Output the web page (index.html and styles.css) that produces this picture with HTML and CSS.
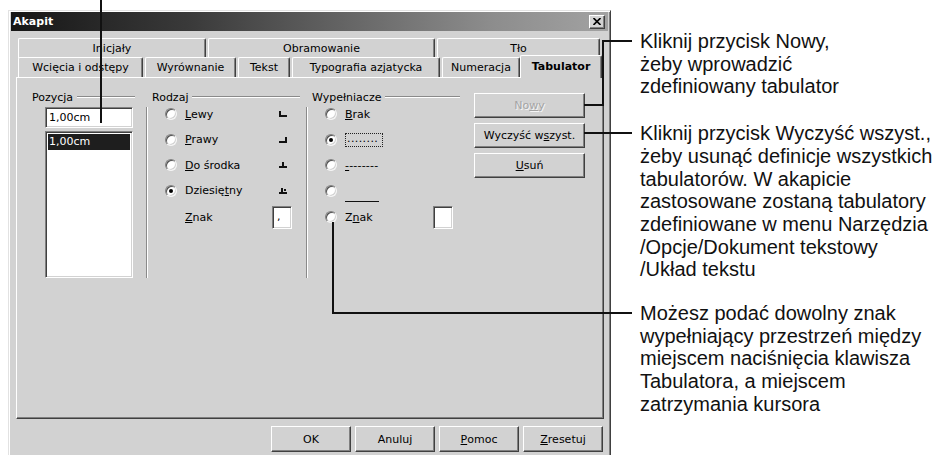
FILE: index.html
```html
<!DOCTYPE html>
<html lang="pl">
<head>
<meta charset="utf-8">
<title>Akapit</title>
<link rel="stylesheet" href="styles.css">
</head>
<body>
<div class="stage">
  <div class="dialog">
    <div class="titlebar">
      <span class="title">Akapit</span>
      <span class="close">
        <svg width="8" height="7" viewBox="0 0 8 7"><path d="M0.5 0 L7.5 7 M7.5 0 L0.5 7" stroke="#000" stroke-width="1.6" fill="none"/></svg>
      </span>
    </div>
    <div class="client">
      <div class="tabs">
        <div class="tabrow back">
          <div class="tab t-inicjaly">Inicjały</div>
          <div class="tab t-obram">Obramowanie</div>
          <div class="tab t-tlo">Tło</div>
        </div>
        <div class="tabrow front">
          <div class="tab t-wciecia">Wcięcia i odstępy</div>
          <div class="tab t-wyrown">Wyrównanie</div>
          <div class="tab t-tekst">Tekst</div>
          <div class="tab t-typo">Typografia azjatycka</div>
          <div class="tab t-numer">Numeracja</div>
          <div class="tab t-tabul active">Tabulator</div>
        </div>
      </div>
      <div class="panel">
        <div class="group pos">
          <div class="legend"><span>Pozycja</span><i class="rule"></i></div>
          <div class="pos-body">
            <div class="field">1,00cm</div>
            <div class="list">
              <div class="item selected">1,00cm</div>
            </div>
          </div>
        </div>
        <div class="group kind">
          <div class="legend"><span>Rodzaj</span><i class="rule"></i></div>
          <div class="gbody">
            <div class="opt"><span class="radio"></span><span class="lbl"><u>L</u>ewy</span>
              <svg class="stop" width="8" height="6" viewBox="0 0 8 6"><rect x="0" y="0" width="2" height="6"/><rect x="0" y="4" width="8" height="2"/></svg></div>
            <div class="opt"><span class="radio"></span><span class="lbl"><u>P</u>rawy</span>
              <svg class="stop" width="8" height="6" viewBox="0 0 8 6"><rect x="6" y="0" width="2" height="6"/><rect x="0" y="4" width="8" height="2"/></svg></div>
            <div class="opt"><span class="radio"></span><span class="lbl"><u>D</u>o środka</span>
              <svg class="stop" width="8" height="6" viewBox="0 0 8 6"><rect x="3" y="0" width="2" height="6"/><rect x="0" y="4" width="8" height="2"/></svg></div>
            <div class="opt"><span class="radio on"></span><span class="lbl">Dziesię<u>t</u>ny</span>
              <svg class="stop" width="8" height="6" viewBox="0 0 8 6"><rect x="2" y="0" width="2" height="6"/><rect x="0" y="4" width="8" height="2"/><rect x="5" y="1" width="2" height="2"/></svg></div>
            <div class="opt char"><span class="lbl"><u>Z</u>nak</span><span class="charbox">,</span></div>
          </div>
        </div>
        <div class="group fill">
          <div class="legend"><span>Wypełniacze</span><i class="rule"></i></div>
          <div class="gbody">
            <div class="opt"><span class="radio"></span><span class="lbl"><u>B</u>rak</span></div>
            <div class="opt"><span class="radio on"></span><span class="lbl dots">........</span></div>
            <div class="opt"><span class="radio"></span><span class="lbl dashes"><u>-</u>-------</span></div>
            <div class="opt"><span class="radio"></span><span class="lbl solid"></span></div>
            <div class="opt char"><span class="radio"></span><span class="lbl">Z<u>n</u>ak</span><span class="charbox"></span></div>
          </div>
        </div>
        <div class="actions">
          <div class="btn disabled">No<u>w</u>y</div>
          <div class="btn">Wyczyść w<u>s</u>zyst.</div>
          <div class="btn"><u>U</u>suń</div>
        </div>
      </div>
      <div class="footer">
        <div class="btn">OK</div>
        <div class="btn">Anuluj</div>
        <div class="btn"><u>P</u>omoc</div>
        <div class="btn"><u>Z</u>resetuj</div>
      </div>
    </div>
  </div>

  <div class="notes">
    <p class="note n1">Kliknij przycisk Nowy,<br>żeby wprowadzić<br>zdefiniowany tabulator</p>
    <p class="note n2">Kliknij przycisk Wyczyść wszyst.,<br>żeby usunąć definicje wszystkich<br>tabulatorów. W akapicie<br>zastosowane zostaną tabulatory<br>zdefiniowane w menu Narzędzia<br>/Opcje/Dokument tekstowy<br>/Układ tekstu</p>
    <p class="note n3">Możesz podać dowolny znak<br>wypełniający przestrzeń między<br>miejscem naciśnięcia klawisza<br>Tabulatora, a miejscem<br>zatrzymania kursora</p>
  </div>

  <!-- leader lines from the notes to the controls -->
  <div class="leader l-pos"></div>
  <div class="leader l-new-a"></div>
  <div class="leader l-new-b"></div>
  <div class="leader l-new-c"></div>
  <div class="leader l-clear"></div>
  <div class="leader l-char-a"></div>
  <div class="leader l-char-b"></div>
</div>
</body>
</html>
```

FILE: styles.css
```css
* { box-sizing: border-box; }

html, body {
  margin: 0;
  height: 100%;
  overflow: hidden;
  background: #fff;
}

.stage {
  position: relative;
  display: flex;
  align-items: flex-start;
  height: 455px;
  overflow: hidden;
}

/* ---------- dialog window ---------- */
.dialog {
  flex: none;
  margin: 10px 0 0 8px;
  width: 603px;
  height: 470px;
  padding: 1px 2px 2px 2px;
  background: #d2d2d2;
  border: 1px solid;
  border-color: #e2e2e2 #404040 #404040 #e2e2e2;
  box-shadow: inset 1px 1px #fff, inset -1px -1px #808080;
  display: flex;
  flex-direction: column;
  font-family: "DejaVu Sans", sans-serif;
  font-size: 11px;
  color: #000;
}

.titlebar {
  flex: none;
  height: 19px;
  display: flex;
  align-items: center;
  padding: 0 3px 0 2px;
  background: linear-gradient(to right, #161616 0%, #3a3a3a 30%, #8c8c8c 80%, #a2a2a2 100%);
}

.title {
  font-weight: bold;
  font-size: 11px;
  color: #fff;
}

.close {
  margin-left: auto;
  width: 16px;
  height: 14px;
  display: flex;
  align-items: center;
  justify-content: center;
  background: #d2d2d2;
  border: 1px solid;
  border-color: #fff #404040 #404040 #fff;
  box-shadow: inset -1px -1px #808080;
}

.client {
  flex: 1;
  display: flex;
  flex-direction: column;
  padding: 7px 4px 0 5px;
}

/* ---------- tabs ---------- */
.tabs {
  display: flex;
  flex-direction: column;
  padding-left: 2px;
}

.tabrow {
  display: flex;
  gap: 2px;
}

.tab {
  flex: none;
  display: flex;
  justify-content: center;
  padding-top: 3px;
  background: #d2d2d2;
  border-top: 1px solid #fff;
  border-left: 1px solid #fff;
  border-right: 1px solid #404040;
  border-radius: 2px 2px 0 0;
  box-shadow: inset -1px 0 #808080;
  white-space: nowrap;
}

.back .tab { height: 20px; }
.front { margin-top: -1px; }
.front .tab { height: 20px; }

.t-inicjaly { width: 188px; }
.t-obram { width: 227px; }
.t-tlo { width: 163px; }

.t-wciecia { width: 125px; }
.t-wyrown { width: 91px; }
.t-tekst { width: 52px; }
.t-typo { width: 148px; }
.t-numer { width: 78px; }

.tab.active {
  position: relative;
  z-index: 1;
  width: 82px;
  height: 23px;
  margin: -2px 0 -1px -2px;
  padding-top: 4px;
  font-weight: bold;
}

/* ---------- tab page ---------- */
.panel {
  height: 342px;
  display: flex;
  align-items: flex-start;
  padding: 12px 0 0 15px;
  border: 1px solid;
  border-color: #fff #404040 #404040 #fff;
  box-shadow: inset -1px -1px #808080;
}

.legend {
  display: flex;
  align-items: center;
  height: 14px;
}

.legend .rule {
  flex: 1;
  height: 2px;
  margin-left: 4px;
  border-top: 1px solid #8a8a8a;
  border-bottom: 1px solid #fff;
}

.group.pos { width: 103px; }
.pos-body { margin-top: 3px; padding-left: 13px; }

.field {
  width: 88px;
  height: 21px;
  padding: 3px 0 0 3px;
  background: #fff;
  border: 1px solid;
  border-color: #808080 #fff #fff #808080;
  box-shadow: inset 1px 1px #404040, inset -1px -1px #d2d2d2;
}

.list {
  margin-top: 3px;
  width: 88px;
  height: 147px;
  padding: 2px;
  background: #fff;
  border: 1px solid;
  border-color: #808080 #fff #fff #808080;
  box-shadow: inset 1px 1px #404040, inset -1px -1px #d2d2d2;
}

.item {
  height: 16px;
  padding: 1px 0 0 1px;
}

.item.selected {
  background: #1e1e1e;
  color: #fff;
}

.group.kind { width: 154px; margin-left: 11px; }
.group.fill { width: 154px; margin-left: 6px; }
.kind .legend span, .fill .legend span { padding-left: 6px; }

.gbody {
  margin-top: 3px;
  height: 171px;
  padding-left: 18px;
  border-left: 1px solid #8a8a8a;
  box-shadow: inset 1px 0 #fff;
  display: flex;
  flex-direction: column;
  gap: 11.5px;
}

.opt {
  height: 14px;
  display: flex;
  align-items: center;
}

.radio {
  flex: none;
  position: relative;
  width: 12px;
  height: 12px;
  margin-right: 8px;
  border-radius: 50%;
  background: #fff;
  border: 1px solid;
  border-color: #808080 #f4f4f4 #f4f4f4 #808080;
  box-shadow: inset 1px 1px #505050, inset -1px -1px #d2d2d2;
}

.radio.on::after {
  content: "";
  position: absolute;
  left: 3px;
  top: 3px;
  width: 4px;
  height: 4px;
  border-radius: 50%;
  background: #000;
}

.stop {
  margin-left: auto;
  margin-right: 13px;
  fill: #111;
}

.opt.char {
  height: 23px;
  margin-top: -3.5px;
}

.kind .opt.char .lbl { margin-left: 20px; }

.charbox {
  margin-left: auto;
  margin-right: 8px;
  width: 20px;
  height: 23px;
  padding: 3px 0 0 4px;
  background: #fff;
  border: 1px solid;
  border-color: #808080 #fff #fff #808080;
  box-shadow: inset 1px 1px #404040, inset -1px -1px #d2d2d2;
}

.fill .charbox { margin-right: 7px; }

.lbl.dots {
  width: 38px;
  height: 14px;
  line-height: 10px;
  padding-left: 1px;
  border: 1px dotted #222;
  letter-spacing: 0.4px;
}

.lbl.dashes { letter-spacing: 0.2px; }

.lbl.solid {
  width: 34px;
  height: 14px;
  margin-top: 8px;
  border-bottom: 1px solid #111;
}

/* ---------- push buttons ---------- */
.btn {
  display: flex;
  align-items: center;
  justify-content: center;
  background: #d2d2d2;
  border: 1px solid;
  border-color: #fff #404040 #404040 #fff;
  box-shadow: inset -1px -1px #808080;
  white-space: nowrap;
}

.actions {
  width: 111px;
  margin: 3px 0 0 14px;
  display: flex;
  flex-direction: column;
  gap: 5px;
}

.actions .btn { height: 25px; }

.btn.disabled {
  color: #a4a4a4;
  text-shadow: 1px 1px #f6f6f6;
}

.footer {
  display: flex;
  justify-content: flex-end;
  gap: 4px;
  margin-top: 7px;
  padding-right: 1px;
}

.footer .btn {
  width: 80px;
  height: 26px;
}

/* ---------- side notes ---------- */
.notes {
  flex: none;
  margin-left: 29px;
  font-family: "Liberation Sans", Arial, sans-serif;
  font-size: 20px;
  line-height: 22.7px;
  color: #111;
}

.note {
  margin: 0;
  white-space: nowrap;
}

.n1 { margin-top: 30px; }
.n2 { margin-top: 24px; }
.n3 { margin-top: 21px; }

.leader {
  position: absolute;
  z-index: 5;
  background: #111;
}

.l-pos { left: 100px; top: 0; width: 2px; height: 123px; }
.l-new-a { left: 584px; top: 104px; width: 20px; height: 2px; }
.l-new-b { left: 602px; top: 40px; width: 2px; height: 66px; }
.l-new-c { left: 602px; top: 40px; width: 30px; height: 2px; }
.l-clear { left: 584px; top: 132px; width: 48px; height: 2px; }
.l-char-a { left: 332px; top: 222px; width: 2px; height: 92px; }
.l-char-b { left: 332px; top: 312px; width: 300px; height: 2px; }
```
